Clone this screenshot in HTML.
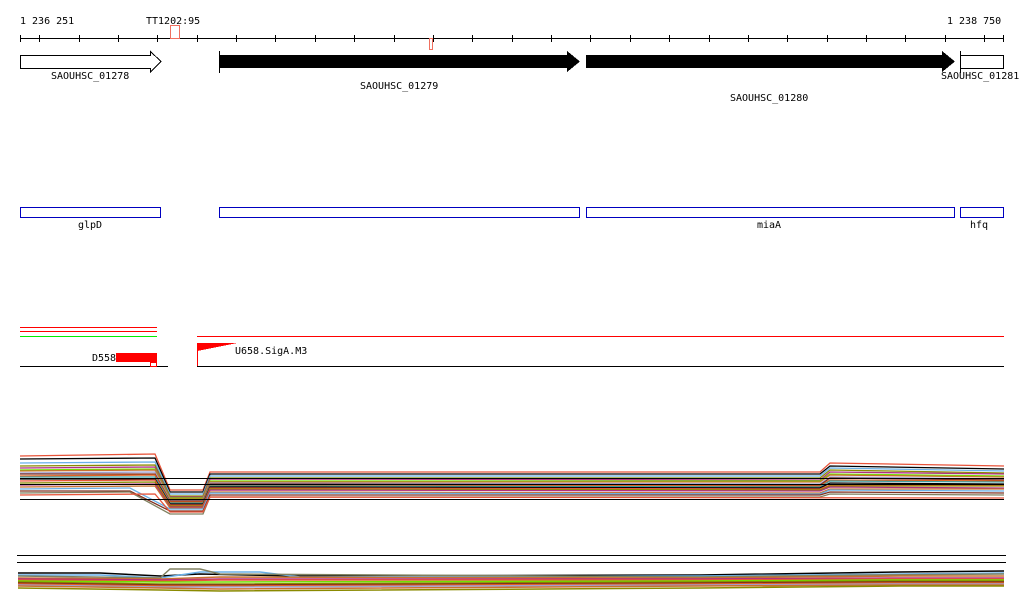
<!DOCTYPE html>
<html><head><meta charset="utf-8"><style>
html,body{margin:0;padding:0;background:#fff;}
svg{display:block;}
text{font-family:"DejaVu Sans Mono","Liberation Mono",monospace;font-size:10px;fill:#000;}
</style></head><body>
<svg width="1024" height="611" viewBox="0 0 1024 611" xmlns="http://www.w3.org/2000/svg" shape-rendering="crispEdges">
<!-- axis -->
<text x="20" y="24">1 236 251</text>
<text x="146" y="24">TT1202:95</text>
<text x="947" y="24">1 238 750</text>
<line x1="20" y1="38.5" x2="1004" y2="38.5" stroke="#000"/>
<g stroke="#000">
<line x1="20.5" y1="35" x2="20.5" y2="42"/><line x1="39.5" y1="35" x2="39.5" y2="42"/><line x1="79.5" y1="35" x2="79.5" y2="42"/><line x1="118.5" y1="35" x2="118.5" y2="42"/><line x1="157.5" y1="35" x2="157.5" y2="42"/><line x1="197.5" y1="35" x2="197.5" y2="42"/><line x1="236.5" y1="35" x2="236.5" y2="42"/><line x1="275.5" y1="35" x2="275.5" y2="42"/><line x1="315.5" y1="35" x2="315.5" y2="42"/><line x1="354.5" y1="35" x2="354.5" y2="42"/><line x1="394.5" y1="35" x2="394.5" y2="42"/><line x1="433.5" y1="35" x2="433.5" y2="42"/><line x1="472.5" y1="35" x2="472.5" y2="42"/><line x1="512.5" y1="35" x2="512.5" y2="42"/><line x1="551.5" y1="35" x2="551.5" y2="42"/><line x1="590.5" y1="35" x2="590.5" y2="42"/><line x1="630.5" y1="35" x2="630.5" y2="42"/><line x1="669.5" y1="35" x2="669.5" y2="42"/><line x1="709.5" y1="35" x2="709.5" y2="42"/><line x1="748.5" y1="35" x2="748.5" y2="42"/><line x1="787.5" y1="35" x2="787.5" y2="42"/><line x1="827.5" y1="35" x2="827.5" y2="42"/><line x1="866.5" y1="35" x2="866.5" y2="42"/><line x1="905.5" y1="35" x2="905.5" y2="42"/><line x1="945.5" y1="35" x2="945.5" y2="42"/><line x1="984.5" y1="35" x2="984.5" y2="42"/><line x1="1003.5" y1="35" x2="1003.5" y2="42"/>
</g>
<rect x="170.5" y="25.5" width="9" height="13" fill="#fff" stroke="#f07060"/>
<rect x="429.5" y="38.5" width="3" height="11" fill="#fff" stroke="#f07060"/>
<!-- genes -->
<polygon points="20.5,55.5 150.5,55.5 150.5,51.5 161,61.5 150.5,72 150.5,68.5 20.5,68.5" fill="#fff" stroke="#000"/>
<text x="51" y="79">SAOUHSC_01278</text>
<line x1="219.5" y1="51" x2="219.5" y2="73" stroke="#000"/>
<polygon points="219.5,55 567,55 567,51 580,61.5 567,72 567,68 219.5,68" fill="#000"/>
<text x="360" y="89">SAOUHSC_01279</text>
<polygon points="586,55 942,55 942,51 955,61.5 942,72 942,68 586,68" fill="#000"/>
<text x="730" y="101">SAOUHSC_01280</text>
<line x1="960.5" y1="51" x2="960.5" y2="73" stroke="#000"/>
<rect x="960.5" y="55.5" width="43" height="13" fill="#fff" stroke="#000"/>
<text x="941" y="79">SAOUHSC_01281</text>
<!-- blue boxes -->
<g fill="none" stroke="#0000c0">
<rect x="20.5" y="207.5" width="140" height="10"/>
<rect x="219.5" y="207.5" width="360" height="10"/>
<rect x="586.5" y="207.5" width="368" height="10"/>
<rect x="960.5" y="207.5" width="43" height="10"/>
</g>
<text x="78" y="228">glpD</text>
<text x="757" y="228">miaA</text>
<text x="970" y="228">hfq</text>
<!-- track 3 -->
<line x1="20" y1="327.5" x2="157" y2="327.5" stroke="#f00"/>
<line x1="20" y1="331.5" x2="157" y2="331.5" stroke="#f00"/>
<line x1="20" y1="336.5" x2="157" y2="336.5" stroke="#0e0"/>
<line x1="197" y1="336.5" x2="1004" y2="336.5" stroke="#f00"/>
<line x1="20" y1="366.5" x2="168" y2="366.5" stroke="#000"/>
<line x1="197" y1="366.5" x2="1004" y2="366.5" stroke="#000"/>
<text x="92" y="361">D558</text>
<rect x="116" y="353" width="41" height="9" fill="#f00"/>
<rect x="150.5" y="362.5" width="6" height="4" fill="#fff" stroke="#f00"/>
<line x1="197.5" y1="343" x2="197.5" y2="366" stroke="#f00"/>
<polygon points="197,343 237,343 197,351" fill="#f00"/>
<text x="235" y="354">U658.SigA.M3</text>
<!-- wiggle tracks -->
<g fill="none" stroke-width="1.3" shape-rendering="auto">
<polyline stroke="#e8543a" points="20,456 155,454 170,490 203,490 210,472 820,472 830,463 1004,466"/>
<polyline stroke="#000" points="20,459 155,458 170,492 203,492 210,474 820,474 830,466 1004,469"/>
<polyline stroke="#6ab0e8" points="20,463 155,462 170,494 203,494 210,476 820,476 830,468 1004,471"/>
<polyline stroke="#8a8a00" points="20,466 155,465 170,496 203,496 210,478 820,478 830,470 1004,473"/>
<polyline stroke="#b03080" points="20,468 155,467 170,497 203,497 210,479 820,480 830,472 1004,474"/>
<polyline stroke="#70e000" points="20,470 155,469 170,498 203,498 210,481 820,481 830,474 1004,476"/>
<polyline stroke="#c87030" points="20,471 155,470 170,499 203,499 210,482 820,482 830,475 1004,477"/>
<polyline stroke="#a0a0d0" points="20,473 155,472 170,500 203,500 210,483 820,484 830,477 1004,479"/>
<polyline stroke="#803020" points="20,474 155,474 170,501 203,501 210,484 820,485 830,478 1004,480"/>
<polyline stroke="#e06020" points="20,476 155,475 170,502 203,502 210,485 820,486 830,480 1004,481"/>
<polyline stroke="#40a0a0" points="20,477 155,477 170,503 203,503 210,486 820,487 830,481 1004,482"/>
<polyline stroke="#000" points="20,479 155,479 170,504 203,504 210,487 820,488 830,483 1004,484"/>
<polyline stroke="#e8543a" points="20,481 155,480 170,505 203,505 210,488 820,489 830,485 1004,485"/>
<polyline stroke="#8a8a00" points="20,483 155,482 170,506 203,506 210,489 820,490 830,486 1004,486"/>
<polyline stroke="#b03080" points="20,485 155,484 170,507 203,507 210,490 820,491 830,487 1004,488"/>
<polyline stroke="#c87030" points="20,487 155,486 170,508 203,508 210,492 820,493 830,489 1004,489"/>
<polyline stroke="#6ab0e8" points="20,489 130,488 170,509 203,509 210,493 820,494 830,490 1004,491"/>
<polyline stroke="#803020" points="20,491 130,491 170,511 203,511 210,495 820,495 830,492 1004,493"/>
<polyline stroke="#808060" points="20,493 130,492 170,514 203,514 210,497 820,497 830,494 1004,495"/>
<polyline stroke="#e8543a" points="20,495 155,494 170,512 203,512 210,497 1004,498"/>
</g>
<line x1="20" y1="478.5" x2="1004" y2="478.5" stroke="#000"/>
<line x1="20" y1="484.5" x2="1004" y2="484.5" stroke="#000"/>
<line x1="20" y1="499.5" x2="1004" y2="499.5" stroke="#000"/>
<line x1="17" y1="555.5" x2="1006" y2="555.5" stroke="#000"/>
<line x1="17" y1="562.5" x2="1006" y2="562.5" stroke="#000"/>
<g fill="none" stroke-width="1.5" shape-rendering="auto">
<polyline stroke="#000" points="18,573 100,573 160,576 200,574 300,576 700,575 900,572 1004,571"/>
<polyline stroke="#6ab0e8" points="18,575 100,575 160,578 200,572 260,572 300,577 700,576 900,574 1004,573"/>
<polyline stroke="#808060" points="18,576 160,578 170,569 200,569 220,574 700,577 880,575 1004,574"/>
<polyline stroke="#c87030" points="18,578 160,579 220,577 700,578 900,576 1004,576"/>
<polyline stroke="#b03080" points="18,579 160,580 220,579 700,579 900,578 1004,578"/>
<polyline stroke="#e8543a" points="18,580 160,581 220,580 700,580 900,579 1004,579"/>
<polyline stroke="#70e000" points="18,581 160,582 220,582 700,581 900,580 1004,580"/>
<polyline stroke="#8a8a00" points="18,582 160,584 220,584 700,582 900,581 1004,581"/>
<polyline stroke="#803020" points="18,583 160,585 220,585 700,583 900,582 1004,582"/>
<polyline stroke="#e06020" points="18,584 160,586 220,586 700,584 900,583 1004,583"/>
<polyline stroke="#a0a0d0" points="18,585 160,587 220,587 700,585 900,584 1004,584"/>
<polyline stroke="#c87030" points="18,586 160,588 220,589 700,586 900,585 1004,585"/>
<polyline stroke="#8a8a00" points="18,588 160,590 220,591 700,588 900,586 1004,586"/>
</g>
</svg>
</body></html>
